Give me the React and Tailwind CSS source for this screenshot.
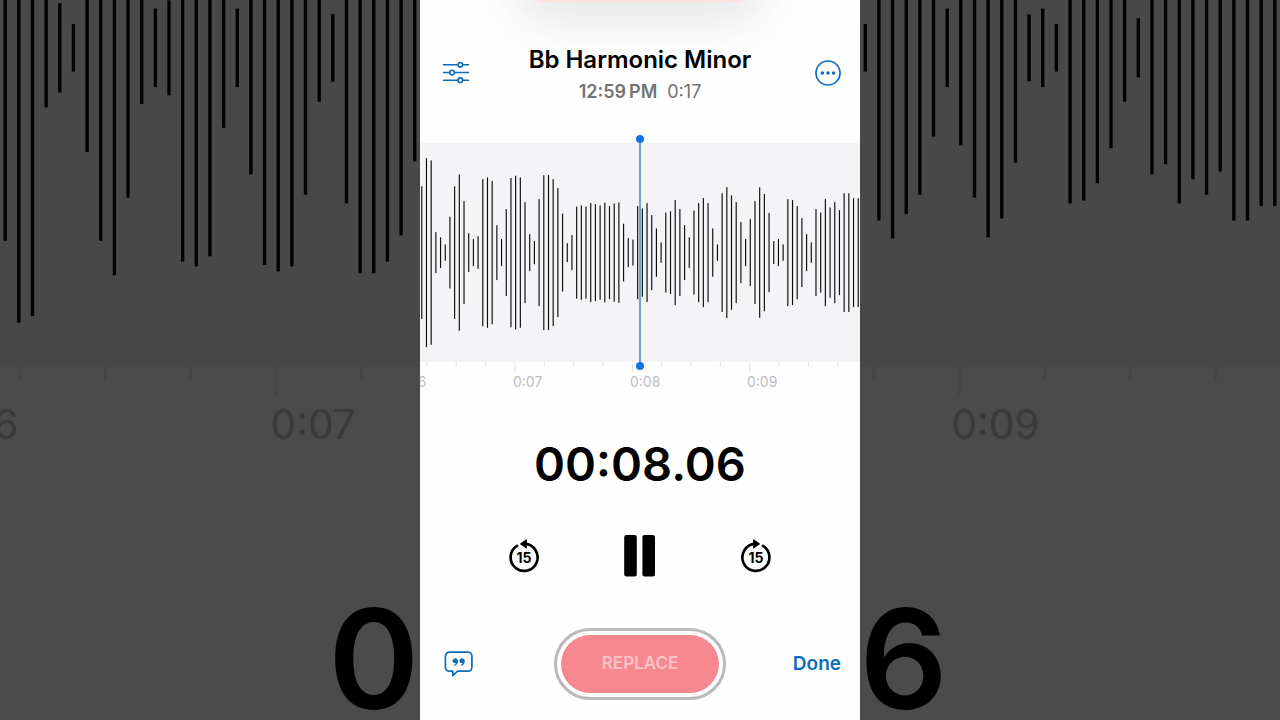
/**
 * Voice memo player - recording waveform, playback controls and replace button
 */

// Bar heights of the recording, in thirds of a unit
const BARS = [
  398, 567, 553, 123, 92, 49, 215, 398, 469, 309, 116, 81, 98, 441, 451, 430,
  165, 81, 261, 448, 461, 451, 303, 111, 70, 321, 465, 465, 441, 387, 234, 57,
  105, 276, 283, 276, 297, 291, 283, 299, 279, 295, 301, 173, 87, 78, 279, 265,
  297, 225, 145, 61, 240, 248, 315, 261, 165, 92, 252, 297, 327, 297, 145, 49,
  356, 393, 343, 303, 183, 81, 201, 309, 391, 352, 237, 69, 81, 49, 321, 315,
  279, 207, 111, 61, 261, 240, 321, 271, 303, 255, 356, 356, 326, 326,
];

const BAR_STEP = 4.693;
const TICK_STEP = 29.35;
const TICKS = Array.from({ length: 15 }, (_, i) => i);

const LABELS = [
  { x: -24, text: '0:06' },
  { x: 93, text: '0:07' },
  { x: 210, text: '0:08' },
  { x: 327, text: '0:09' },
];

function Timeline({ muted = false }) {
  // The middle label of the muted copy is always behind the player
  const labels = muted ? LABELS.filter((label) => label.text !== '0:08') : LABELS;

  return (
    <svg
      viewBox="0 0 440 252"
      className={`block w-full shrink-0 ${muted ? 'overflow-hidden' : 'overflow-visible'}`}
      aria-hidden={muted}
    >
      <rect width="440" height="219" className={muted ? 'fill-[#484848]' : 'fill-[#f4f3f6]'} />

      {BARS.map((height, i) => (
        <rect
          key={i}
          x={1.2 + i * BAR_STEP}
          y={109.6 - height / 6}
          width="1.15"
          height={height / 3}
          className={muted ? 'fill-black' : 'fill-[#0c0c0d]'}
        />
      ))}

      {/* Time scale, one long tick per second */}
      {TICKS.map((i) => (
        <rect
          key={i}
          x={6.4 + i * TICK_STEP}
          y="219"
          width="1"
          height={i % 4 === 3 ? 10 : 5}
          className={muted ? 'fill-[#464646]' : 'fill-[#e3e3e5]'}
        />
      ))}
      <svg width="440" height="252">
        {labels.map((label) => (
          <text
            key={label.text}
            x={label.x}
            y="244"
            fontSize="14"
            className={muted ? 'fill-[#3a3a3a]' : 'fill-[#bdbdc0]'}
          >
            {label.text}
          </text>
        ))}
      </svg>

      {/* Playhead */}
      {!muted && (
        <g>
          <rect x="219.2" y="-4" width="1.6" height="227" className="fill-[#4796b8]" />
          <circle cx="220" cy="-4" r="4" className="fill-[#1271e6]" />
          <circle cx="220" cy="223" r="4" className="fill-[#1271e6]" />
        </g>
      )}
    </svg>
  );
}

function Backdrop() {
  return (
    <div className="absolute inset-0 overflow-hidden bg-[#4b4b4b]" aria-hidden="true">
      <div className="flex h-[462px] items-end overflow-hidden">
        <Timeline muted />
      </div>
      {/* Only the outer digits show on either side of the player */}
      <p className="mt-[117px] flex justify-center gap-[440px] pr-1 text-[138px] leading-40 font-semibold">
        <span>0</span>
        <span>6</span>
      </p>
    </div>
  );
}

function OptionsIcon() {
  return (
    <svg className="h-7 w-7" viewBox="0 0 28 28" fill="none" stroke="currentColor" strokeWidth="1.6" strokeLinecap="round">
      <path d="M1.5 4.8h14.4M20.7 4.8H26.5M1.5 12.5h6.2M12.500 12.500h14M1.5 20.2h14.4M20.7 20.2H26.5" />
      <circle cx="18.3" cy="4.8" r="2.3" />
      <circle cx="10.1" cy="12.5" r="2.3" />
      <circle cx="18.3" cy="20.2" r="2.3" />
    </svg>
  );
}

function MoreIcon() {
  return (
    <svg className="h-7 w-7" viewBox="0 0 28 28" fill="none">
      <circle cx="14" cy="13" r="12" stroke="currentColor" strokeWidth="1.7" />
      <circle cx="8.4" cy="13" r="1.8" fill="currentColor" />
      <circle cx="14" cy="13" r="1.8" fill="currentColor" />
      <circle cx="19.6" cy="13" r="1.8" fill="currentColor" />
    </svg>
  );
}

function SkipIcon({ forward = false }) {
  return (
    <svg className="h-9 w-8" viewBox="0 1 32 36">
      <g transform={forward ? 'matrix(-1 0 0 1 32 0)' : undefined}>
        <path
          d="M17 6.9A13.5 13.5 0 1 1 9 8.9"
          fill="none"
          stroke="currentColor"
          strokeWidth="2.7"
          strokeLinecap="round"
        />
        <path
          d="M12.4 6.9 18.4 2.7V11.100Z"
          fill="currentColor"
          stroke="currentColor"
          strokeWidth="1"
          strokeLinejoin="round"
        />
      </g>
      <text x="16" y="25.500" fontSize="14" fontWeight="700" textAnchor="middle" fill="currentColor">
        15
      </text>
    </svg>
  );
}

function PauseIcon() {
  return (
    <svg className="h-12 w-8" viewBox="0 0 32 48" fill="currentColor">
      <rect x="0.2" y="3" width="12.6" height="41.4" rx="2.2" />
      <rect x="18.4" y="3" width="12.6" height="41.4" rx="2.2" />
    </svg>
  );
}

function TranscriptIcon() {
  return (
    <svg className="h-8 w-8" viewBox="0 0 32 32" fill="none">
      <path
        d="M6.4 4.2H24.9A4 4 0 0 1 28.9 8.2V19.2A4 4 0 0 1 24.9 23.2H14.6L9.8 27.6V23.2H6.4A4 4 0 0 1 2.4 19.2V8.2A4 4 0 0 1 6.4 4.2Z"
        stroke="currentColor"
        strokeWidth="1.7"
        strokeLinejoin="round"
      />
      <g fill="currentColor">
        <path d="M12.1 10.2c1.8 0 2.9 1.3 2.9 3.1 0 2.2-1.4 4-3.4 4.4-.7.1-.9-.7-.3-1 .9-.4 1.4-1 1.5-1.7-.2.1-.5.1-.8.1-1.4 0-2.4-1-2.4-2.4s1.1-2.5 2.5-2.5Z" />
        <path d="M18.9 10.2c1.8 0 2.9 1.3 2.9 3.1 0 2.2-1.4 4-3.4 4.4-.7.1-.9-.7-.3-1 .9-.4 1.4-1 1.5-1.7-.2.1-.5.1-.8.1-1.4 0-2.4-1-2.4-2.4s1.1-2.5 2.5-2.5Z" />
      </g>
    </svg>
  );
}

export default function App() {
  return (
    <div className="relative min-h-screen overflow-hidden font-['Inter','Liberation_Sans',sans-serif] text-black">
      <Backdrop />

      <main className="relative mx-auto flex min-h-screen w-full max-w-[440px] flex-col overflow-hidden bg-[#fefefe]">
        {/* Edge of the card above, with its soft shadow */}
        <div className="absolute -top-10 left-1/2 h-[42px] w-[220px] -translate-x-1/2 rounded-b-xl bg-[#fae3df] shadow-[0_6px_44px_12px_rgba(45,35,55,0.11)]" />

        <header className="relative grid grid-cols-[1fr_auto_1fr] items-center px-[18px] pt-11 pb-[39px]">
          <button type="button" aria-label="Playback options" className="justify-self-start px-1 text-[#0d6dbd]">
            <OptionsIcon />
          </button>
          <div className="flex flex-col items-center gap-1">
            <h1 className="text-[24px] leading-8 font-semibold">Bb Harmonic Minor</h1>
            <p className="flex gap-2.5 text-[18px] leading-6 text-[#737375]">
              <span className="font-semibold">12:59{'\u2009'}PM</span>
              <span>0:17</span>
            </p>
          </div>
          <button type="button" aria-label="More" className="justify-self-end text-[#0d6dbd]">
            <MoreIcon />
          </button>
        </header>

        <Timeline />

        <p className="mt-[41px] text-center text-[47px] leading-14 font-semibold">00:08.06</p>

        <div className="mt-10 flex items-center justify-center gap-[84px]">
          <button type="button" aria-label="Back 15 seconds">
            <SkipIcon />
          </button>
          <button type="button" aria-label="Pause">
            <PauseIcon />
          </button>
          <button type="button" aria-label="Forward 15 seconds">
            <SkipIcon forward />
          </button>
        </div>

        <footer className="mt-auto grid grid-cols-[1fr_auto_1fr] items-center px-[19px] pt-12 pb-5">
          <button type="button" aria-label="Transcript" className="justify-self-start px-1 text-[#0d6dbd]">
            <TranscriptIcon />
          </button>
          <div className="rounded-full border-3 border-[#bab9bd] p-1">
            <button
              type="button"
              className="h-[58px] w-[158px] rounded-full bg-[#f7888f] text-[17px] font-semibold text-[#fcc3c8]"
            >
              REPLACE
            </button>
          </div>
          <button type="button" className="justify-self-end text-[19px] font-semibold text-[#0d6dbd]">
            Done
          </button>
        </footer>
      </main>
    </div>
  );
}
